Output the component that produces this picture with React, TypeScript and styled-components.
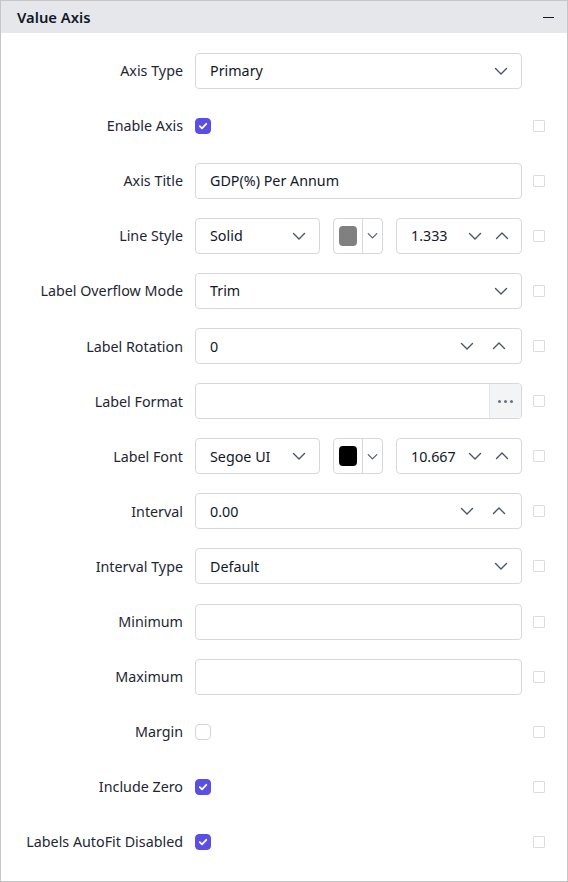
import React from "react";
import styled, { createGlobalStyle } from "styled-components";

const Global = createGlobalStyle`
  html, body { margin: 0; padding: 0; background: #fff; }
  body { font-family: "Segoe UI", "Noto Sans", "Liberation Sans", sans-serif; }
  * { box-sizing: border-box; }
`;

const Panel = styled.div`
  width: 568px;
  height: 882px;
  border: 1px solid #c6c6c6;
  background: #fff;
  display: flex;
  flex-direction: column;
`;

const Header = styled.div`
  height: 32px;
  background: #e5e7eb;
  display: flex;
  align-items: center;
  justify-content: space-between;
  padding: 0 13px 0 16px;
  font-size: 14.8px;
  font-weight: 600;
  color: #111827;
`;

const Collapse = styled.span`
  width: 11px;
  height: 1px;
  background: #111827;
  margin-top: 1px;
`;

const Body = styled.div`
  display: grid;
  grid-template-columns: 194px 327px 22px;
  grid-auto-rows: 36px;
  row-gap: 19.1px;
  padding-top: 19.6px;
  align-items: center;
`;

const Label = styled.div`
  text-align: right;
  font-size: 14.3px;
  color: #1e2633;
  white-space: nowrap;
  padding-right: 12px;
`;

const Field = styled.div<{ $w?: number }>`
  height: 36px;
  width: ${(p) => (p.$w ? `${p.$w}px` : "100%")};
  border: 1px solid #d6d8dc;
  border-radius: 4px;
  display: flex;
  align-items: center;
  font-size: 14.3px;
  color: #111827;
  background: #fff;
  overflow: hidden;
  flex-shrink: 0;
`;

const FieldText = styled.span`
  flex: 1;
  padding-left: 14px;
  white-space: nowrap;
`;

const Group = styled.div`
  display: flex;
  align-items: center;
  gap: 13px;
`;

const IconSlot = styled.span<{ $w?: number }>`
  display: flex;
  align-items: center;
  justify-content: center;
  width: ${(p) => p.$w ?? 26}px;
  height: 100%;
  color: #4b5563;
`;

const Spinners = styled.span`
  display: flex;
  align-items: center;
  margin-right: 6px;
`;

const Swatch = styled.span<{ $c: string }>`
  width: 19px;
  height: 20px;
  border-radius: 4px;
  background: ${(p) => p.$c};
  margin: 0 5px 0 5px;
`;

const SwatchSplit = styled.span`
  width: 1px;
  align-self: stretch;
  background: #d6d8dc;
`;

const Dots = styled.span`
  width: 32px;
  height: 100%;
  background: #f3f4f6;
  border-left: 1px solid #e5e7eb;
  display: flex;
  align-items: center;
  justify-content: center;
  gap: 3px;
  & > i {
    width: 3px;
    height: 3px;
    border-radius: 50%;
    background: #6b7280;
  }
`;

const Check = styled.span<{ $on: boolean }>`
  width: 16px;
  height: 16px;
  border-radius: 4px;
  display: flex;
  align-items: center;
  justify-content: center;
  background: ${(p) => (p.$on ? "#5b4fe3" : "#fff")};
  border: 1px solid ${(p) => (p.$on ? "#5b4fe3" : "#d1d5db")};
`;

const Mini = styled.span`
  width: 12px;
  height: 12px;
  margin-left: 11px;
  border: 1px solid #dcdde0;
  border-radius: 1px;
`;

const Down = ({ s = 14 }: { s?: number }) => (
  <svg width={s} height={s} viewBox="0 0 14 14" fill="none">
    <path d="M1.5 4.5 L7 10 L12.5 4.5" stroke="currentColor" strokeWidth="1.4" strokeLinecap="round" strokeLinejoin="round" />
  </svg>
);

const Up = ({ s = 14 }: { s?: number }) => (
  <svg width={s} height={s} viewBox="0 0 14 14" fill="none">
    <path d="M1.5 9.5 L7 4 L12.5 9.5" stroke="currentColor" strokeWidth="1.4" strokeLinecap="round" strokeLinejoin="round" />
  </svg>
);

const Tick = () => (
  <svg width="10" height="10" viewBox="0 0 10 10" fill="none">
    <path d="M1.8 5.2 L4 7.3 L8.3 2.8" stroke="#fff" strokeWidth="1.8" strokeLinecap="round" strokeLinejoin="round" />
  </svg>
);

const Select = ({ value, w }: { value: string; w?: number }) => (
  <Field $w={w}>
    <FieldText>{value}</FieldText>
    <IconSlot style={{ marginRight: 7 }}>
      <Down />
    </IconSlot>
  </Field>
);

const Numeric = ({ value, w, step = 32 }: { value: string; w?: number; step?: number }) => (
  <Field $w={w}>
    <FieldText>{value}</FieldText>
    <Spinners>
      <IconSlot $w={step}>
        <Down />
      </IconSlot>
      <IconSlot $w={step}>
        <Up />
      </IconSlot>
    </Spinners>
  </Field>
);

const ColorPick = ({ color }: { color: string }) => (
  <Field $w={50}>
    <Swatch $c={color} />
    <SwatchSplit />
    <IconSlot $w={20}>
      <Down s={11} />
    </IconSlot>
  </Field>
);

const Toggle = ({ on }: { on: boolean }) => <Check $on={on}>{on && <Tick />}</Check>;

const FontRow = ({ family, color, size }: { family: string; color: string; size: string }) => (
  <Group>
    <Select value={family} w={125} />
    <ColorPick color={color} />
    <Numeric value={size} w={126} step={27} />
  </Group>
);

type Row = { label: string; control: React.ReactNode; mini?: boolean };

const rows: Row[] = [
  { label: "Axis Type", control: <Select value="Primary" />, mini: false },
  { label: "Enable Axis", control: <Toggle on /> },
  { label: "Axis Title", control: <Field><FieldText>GDP(%) Per Annum</FieldText></Field> },
  { label: "Line Style", control: <FontRow family="Solid" color="#808080" size="1.333" /> },
  { label: "Label Overflow Mode", control: <Select value="Trim" /> },
  { label: "Label Rotation", control: <Numeric value="0" /> },
  {
    label: "Label Format",
    control: (
      <Field>
        <FieldText />
        <Dots>
          <i />
          <i />
          <i />
        </Dots>
      </Field>
    ),
  },
  { label: "Label Font", control: <FontRow family="Segoe UI" color="#000" size="10.667" /> },
  { label: "Interval", control: <Numeric value="0.00" /> },
  { label: "Interval Type", control: <Select value="Default" /> },
  { label: "Minimum", control: <Field /> },
  { label: "Maximum", control: <Field /> },
  { label: "Margin", control: <Toggle on={false} /> },
  { label: "Include Zero", control: <Toggle on /> },
  { label: "Labels AutoFit Disabled", control: <Toggle on /> },
];

export default function App() {
  return (
    <>
      <Global />
      <Panel>
        <Header>
          <span>Value Axis</span>
          <Collapse />
        </Header>
        <Body>
          {rows.map((r) => (
            <React.Fragment key={r.label}>
              <Label>{r.label}</Label>
              {r.control}
              {r.mini === false ? <span /> : <Mini />}
            </React.Fragment>
          ))}
        </Body>
      </Panel>
    </>
  );
}
